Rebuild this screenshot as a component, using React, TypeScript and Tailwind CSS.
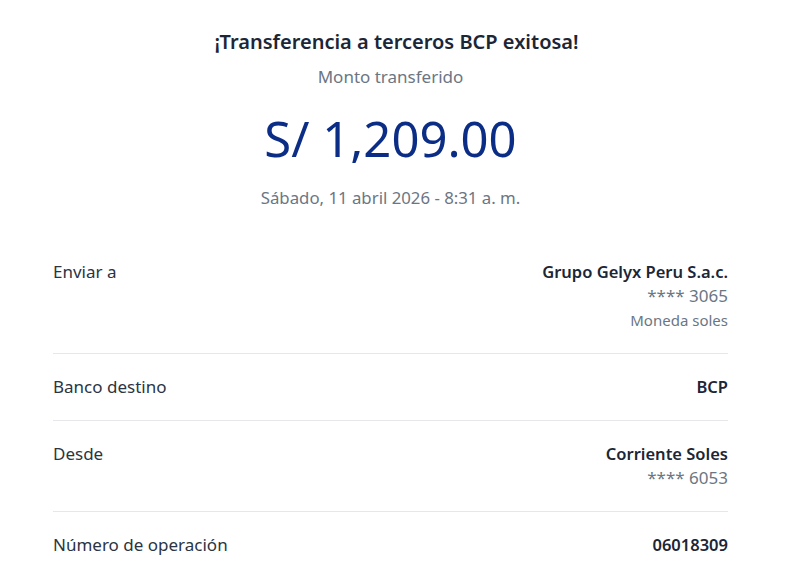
const rows = [
  { label: "Enviar a", value: "Grupo Gelyx Peru S.a.c.", subs: ["**** 3065", "Moneda soles"] },
  { label: "Banco destino", value: "BCP", subs: [] },
  { label: "Desde", value: "Corriente Soles", subs: ["**** 6053"] },
  { label: "Número de operación", value: "06018309", subs: [] },
];

export default function App() {
  return (
    <div className="w-[797px] h-[561px] overflow-hidden bg-white font-['Noto_Sans',sans-serif]">
      <div className="ml-[53px] w-[675px] flex flex-col items-center pt-[28px]">
        <h1 className="ml-[12px] text-[20px] leading-[28px] font-semibold text-[#1b2636]">
          ¡Transferencia a terceros BCP exitosa!
        </h1>
        <p className="mt-[9px] text-[17px] leading-[24px] text-[#6b7684]">Monto transferido</p>
        <p className="mt-[19px] text-[49px] leading-[60px] text-[#0b2d86]">S/ 1,209.00</p>
        <p className="mt-[18px] text-[16.8px] leading-[24px] text-[#6b7684]">Sábado, 11 abril 2026 - 8:31 a. m.</p>
      </div>
      <div className="ml-[53px] w-[675px] mt-[50px]">
        {rows.map((r, i) => (
          <div
            key={r.label}
            className={`flex justify-between ${i < rows.length - 1 ? "border-b border-[#e5e7eb]" : ""} ${i === 0 ? "pt-0" : "pt-[21px]"} pb-[21px]`}
          >
            <span className="text-[17px] leading-[24px] text-[#2b3442]">{r.label}</span>
            <div className="flex flex-col items-end">
              <span className="text-[16.5px] leading-[24px] font-semibold text-[#1b2636]">{r.value}</span>
              {r.subs.map((s, j) => (
                <span
                  key={s}
                  className={`leading-[24px] text-[#6b7684] ${j === 0 ? "text-[17px]" : "text-[15px]"}`}
                >
                  {s}
                </span>
              ))}
            </div>
          </div>
        ))}
      </div>
    </div>
  );
}
